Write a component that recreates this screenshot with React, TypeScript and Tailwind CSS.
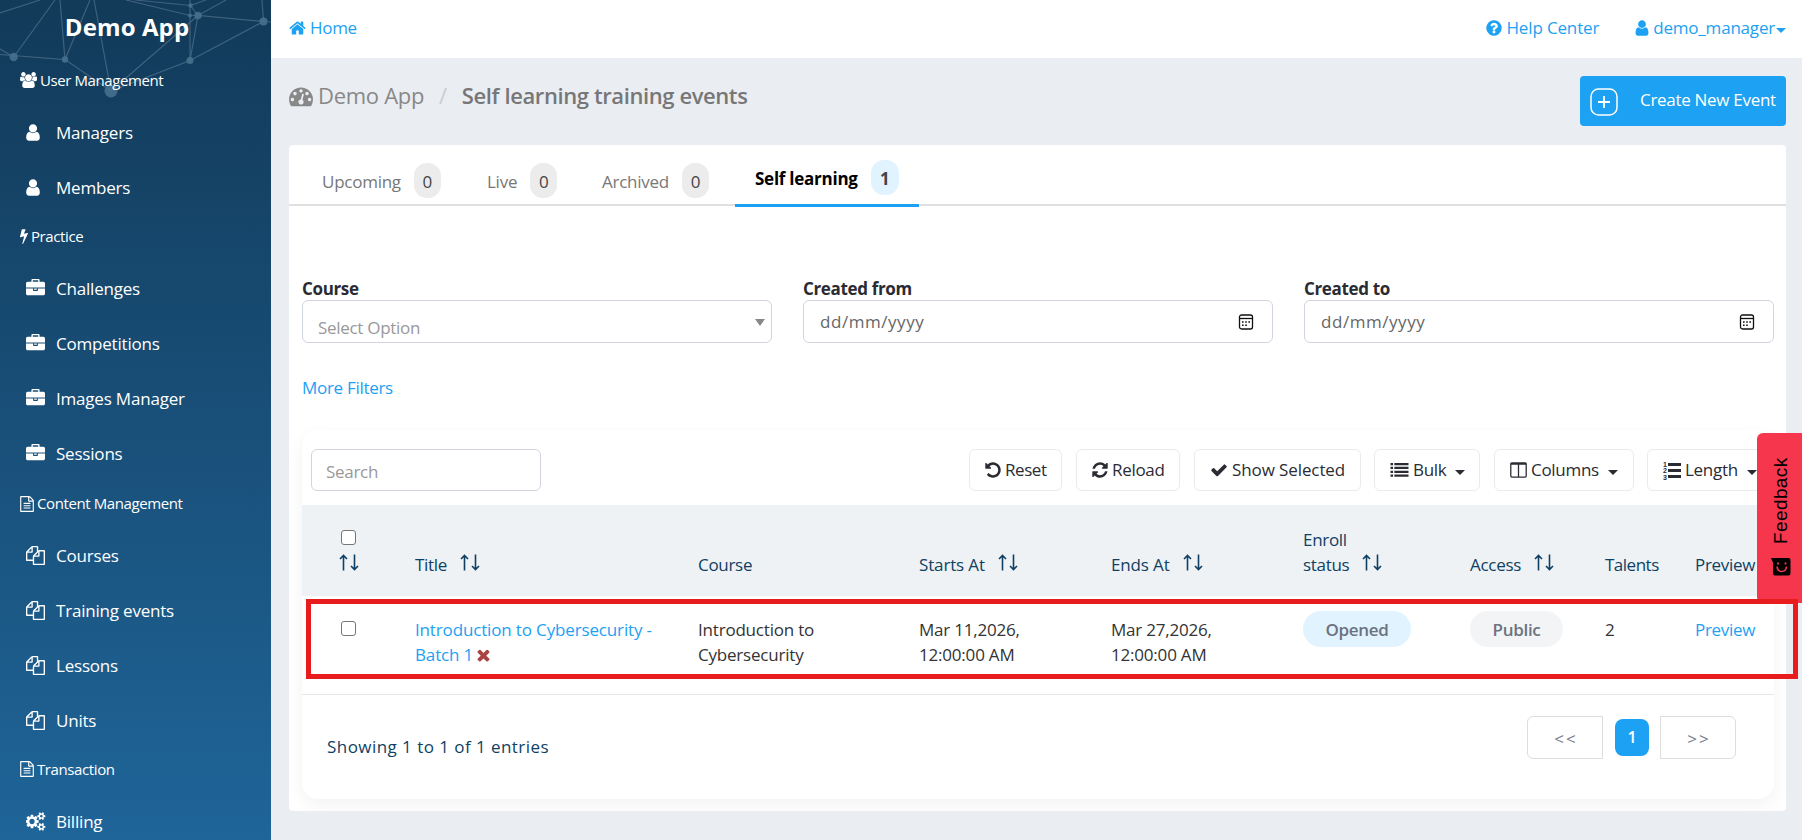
import type { ReactNode } from 'react';

const icons = {
    home: { box: '64 0 1664 1792', d: 'M1472 992v480q0 26-19 45t-45 19h-384v-384h-256v384h-384q-26 0-45-19t-19-45v-480q0-1 .5-3t.5-3l575-474 575 474q1 2 1 6zm223-69l-62 74q-8 9-21 11h-3q-13 0-21-7l-692-577-692 577q-12 8-24 7-13-2-21-11l-62-74q-8-10-7-23.5t11-21.5l719-599q32-26 76-26t76 26l244 204v-195q0-14 9-23t23-9h192q14 0 23 9t9 23v408l219 182q10 8 11 21.5t-7 23.5z' },
    user: { box: '256 0 1280 1792', d: 'M1536 1399q0 109-62.5 187t-150.5 78h-854q-88 0-150.5-78t-62.5-187q0-85 8.5-160.5t31.5-152 58.5-131 94-89 134.5-34.5q131 128 313 128t313-128q76 0 134.5 34.5t94 89 58.5 131 31.5 152 8.5 160.5zm-256-887q0 159-112.5 271.5t-271.5 112.5-271.5-112.5-112.5-271.5 112.5-271.5 271.5-112.5 271.5 112.5 112.5 271.5z' },
    users: { box: '64 0 1920 1792', d: 'M657 896q-162 5-265 128h-134q-82 0-138-40.5t-56-118.5q0-353 124-353 6 0 43.5 21t97.5 42.5 119 21.5q67 0 133-23-5 37-5 66 0 159 93 294zm1071 637q0 120-73 189.5t-194 69.5h-874q-121 0-194-69.5t-73-189.5q0-53 3.5-103.5t14-109 26.5-108.5 43-97.5 62-81 85.5-53.5 111.5-20q10 0 43 21.5t73 48 107 48 135 21.5 135-21.5 107-48 73-48 43-21.5q61 0 111.5 20t85.5 53.5 62 81 43 97.5 26.5 108.5 14 109 3.5 103.5zm-1024-1277q0 106-75 181t-181 75-181-75-75-181 75-181 181-75 181 75 75 181zm704 384q0 159-112.5 271.5t-271.5 112.5-271.5-112.5-112.5-271.5 112.5-271.5 271.5-112.5 271.5 112.5 112.5 271.5zm576 225q0 78-56 118.5t-138 40.5h-134q-103-123-265-128 93-135 93-294 0-29-5-66 66 23 133 23 59 0 119-21.5t97.5-42.5 43.5-21q124 0 124 353zm-128-609q0 106-75 181t-181 75-181-75-75-181 75-181 181-75 181 75 75 181z' },
    bolt: { box: '448 0 896 1792', d: 'M1333 566q18 20 7 44l-540 1157q-13 25-42 25-4 0-14-2-17-5-25.5-19t-4.5-30l197-808-406 101q-4 1-12 1-18 0-31-11-18-15-13-39l201-825q4-14 16-23t28-9h328q19 0 32 12.5t13 29.5q0 8-5 18l-171 463 396-98q8-2 12-2 19 0 34 15z' },
    briefcase: { box: '0 0 1792 1792', d: 'M640 256h512v-128h-512v128zm1152 640v480q0 66-47 113t-113 47h-1472q-66 0-113-47t-47-113v-480h672v160q0 26 19 45t45 19h320q26 0 45-19t19-45v-160h672zm-768 0v128h-256v-128h256zm768-480v384h-1792v-384q0-66 47-113t113-47h352v-160q0-40 28-68t68-28h576q40 0 68 28t28 68v160h352q66 0 113 47t47 113z' },
    file: { box: '128 0 1536 1792', d: 'M1596 380q28 28 48 76t20 88v1152q0 40-28 68t-68 28h-1344q-40 0-68-28t-28-68v-1600q0-40 28-68t68-28h896q40 0 88 20t76 48zm-444-244v376h376q-10-29-22-41l-313-313q-12-12-41-22zm384 1528v-1024h-416q-40 0-68-28t-28-68v-416h-768v1536h1280zm-1024-864q0-14 9-23t23-9h704q14 0 23 9t9 23v64q0 14-9 23t-23 9h-704q-14 0-23-9t-9-23v-64zm736 224q14 0 23 9t9 23v64q0 14-9 23t-23 9h-704q-14 0-23-9t-9-23v-64q0-14 9-23t23-9h704zm0 256q14 0 23 9t9 23v64q0 14-9 23t-23 9h-704q-14 0-23-9t-9-23v-64q0-14 9-23t23-9h704z' },
    copy: { box: '0 0 1792 1792', d: 'M1696 384q40 0 68 28t28 68v1216q0 40-28 68t-68 28h-960q-40 0-68-28t-28-68v-288h-544q-40 0-68-28t-28-68v-672q0-40 20-88t48-76l408-408q28-28 76-48t88-20h416q40 0 68 28t28 68v328q68-40 128-40h416zm-544 213l-299 299h299v-299zm-640-384l-299 299h299v-299zm196 647l316-316v-416h-384v416q0 40-28 68t-68 28h-416v640h512v-256q0-40 20-88t48-76zm956 804v-1152h-384v416q0 40-28 68t-68 28h-416v640h896z' },
    cogs: { box: '0 0 1920 1792', d: 'M832 896q0-106-75-181t-181-75-181 75-75 181 75 181 181 75 181-75 75-181zm768 512q0-52-38-90t-90-38-90 38-38 90q0 53 37.5 90.5t90.5 37.5 90.5-37.5 37.5-90.5zm0-1024q0-52-38-90t-90-38-90 38-38 90q0 53 37.5 90.5t90.5 37.5 90.5-37.5 37.5-90.5zm-384 421v185q0 10-7 19.5t-16 10.5l-155 24q-11 35-32 76 34 48 90 115 7 10 7 20 0 12-7 19-23 30-82.5 89.5t-78.5 59.5q-11 0-21-7l-115-90q-37 19-77 31-11 108-23 155-7 24-30 24h-186q-11 0-20-7.5t-10-17.5l-23-153q-34-10-75-31l-118 89q-7 7-20 7-11 0-21-8-144-133-144-160 0-9 7-19 10-14 41-53t47-61q-23-44-35-82l-152-24q-10-1-17-9.5t-7-19.5v-185q0-10 7-19.5t16-10.5l155-24q11-35 32-76-34-48-90-115-7-11-7-20 0-12 7-20 22-30 82-89t79-59q11 0 21 7l115 90q34-18 77-32 11-108 23-154 7-24 30-24h186q11 0 20 7.5t10 17.5l23 153q34 10 75 31l118-89q8-7 20-7 11 0 21 8 144 133 144 160 0 9-7 19-12 16-42 54t-45 60q23 48 34 82l152 23q10 2 17 10.5t7 19.5zm640 533v140q0 16-149 31-12 27-30 52 51 113 51 138 0 4-4 7-122 71-124 71-8 0-46-47t-52-68q-20 2-30 2t-30-2q-14 21-52 68t-46 47q-2 0-124-71-4-3-4-7 0-25 51-138-18-25-30-52-149-15-149-31v-140q0-16 149-31 13-29 30-52-51-113-51-138 0-4 4-7 4-2 35-20t59-34 30-16q8 0 46 46.5t52 67.5q20-2 30-2t30 2q51-71 92-112l6-2q4 0 124 70 4 3 4 7 0 25-51 138 17 23 30 52 149 15 149 31zm0-1024v140q0 16-149 31-12 27-30 52 51 113 51 138 0 4-4 7-122 71-124 71-8 0-46-47t-52-68q-20 2-30 2t-30-2q-14 21-52 68t-46 47q-2 0-124-71-4-3-4-7 0-25 51-138-18-25-30-52-149-15-149-31v-140q0-16 149-31 13-29 30-52-51-113-51-138 0-4 4-7 4-2 35-20t59-34 30-16q8 0 46 46.5t52 67.5q20-2 30-2t30 2q51-71 92-112l6-2q4 0 124 70 4 3 4 7 0 25-51 138 17 23 30 52 149 15 149 31z' },
    gauge: { box: '0 0 1792 1792', d: 'M384 1152q0-53-37.5-90.5t-90.5-37.5-90.5 37.5-37.5 90.5 37.5 90.5 90.5 37.5 90.5-37.5 37.5-90.5zm192-448q0-53-37.5-90.5t-90.5-37.5-90.5 37.5-37.5 90.5 37.5 90.5 90.5 37.5 90.5-37.5 37.5-90.5zm428 481l101-382q6-26-7.5-48.5t-38.5-29.5-48 6.5-30 39.5l-101 382q-60 5-107 43.5t-63 98.5q-20 77 20 146t117 89 146-20 89-117q16-60-6-117t-72-91zm660-33q0-53-37.5-90.5t-90.5-37.5-90.5 37.5-37.5 90.5 37.5 90.5 90.5 37.5 90.5-37.5 37.5-90.5zm-640-640q0-53-37.5-90.5t-90.5-37.5-90.5 37.5-37.5 90.5 37.5 90.5 90.5 37.5 90.5-37.5 37.5-90.5zm448 192q0-53-37.5-90.5t-90.5-37.5-90.5 37.5-37.5 90.5 37.5 90.5 90.5 37.5 90.5-37.5 37.5-90.5zm320 448q0 261-141 483-19 29-54 29h-1402q-35 0-54-29-141-221-141-483 0-182 71-348t191-286 286-191 348-71 348 71 286 191 191 286 71 348z' },
    help: { box: '128 0 1536 1792', d: 'M1024 1376v-192q0-14-9-23t-23-9h-192q-14 0-23 9t-9 23v192q0 14 9 23t23 9h192q14 0 23-9t9-23zm256-672q0-88-55.5-163t-138.5-116-170-41q-243 0-371 213-15 24 8 42l132 100q7 6 19 6 16 0 25-12 53-68 86-92 34-24 86-24 48 0 85.5 26t37.5 59q0 38-20 61t-68 45q-63 28-115.5 86.5t-52.5 125.5v36q0 14 9 23t23 9h192q14 0 23-9t9-23q0-19 21.5-49.5t54.5-49.5q32-18 49-28.5t46-35 44.5-48 28-60.5 12.5-81zm384 192q0 209-103 385.5t-279.5 279.5-385.5 103-385.5-103-279.5-279.5-103-385.5 103-385.5 279.5-279.5 385.5-103 385.5 103 279.5 279.5 103 385.5z' },
    undo: { box: '128 0 1536 1792', d: 'M1664 896q0 156-61 298t-164 245-245 164-298 61q-172 0-327-72.5t-264-204.5q-7-10-6.5-22.5t8.5-20.5l137-138q10-9 25-9 16 2 23 12 73 95 179 147t225 52q104 0 198.5-40.5t163.5-109.5 109.5-163.5 40.5-198.5-40.5-198.5-109.5-163.5-163.5-109.5-198.5-40.5q-98 0-188 35.5t-160 101.5l137 138q31 30 14 69-17 40-59 40h-448q-26 0-45-19t-19-45v-448q0-42 40-59 39-17 69 14l130 129q107-101 244.5-156.5t284.5-55.5q156 0 298 61t245 164 164 245 61 298z' },
    refresh: { box: '128 0 1536 1792', d: 'M1639 1056q0 5-1 7-64 268-268 434.5t-478 166.5q-146 0-282.5-55t-243.5-157l-129 129q-19 19-45 19t-45-19-19-45v-448q0-26 19-45t45-19h448q26 0 45 19t19 45-19 45l-137 137q71 66 161 102t187 36q134 0 250-65t186-179q11-17 53-117 8-23 30-23h192q13 0 22.5 9.5t9.5 22.5zm25-800v448q0 26-19 45t-45 19h-448q-26 0-45-19t-19-45 19-45l138-138q-148-137-349-137-134 0-250 65t-186 179q-11 17-53 117-8 23-30 23h-199q-13 0-22.5-9.5t-9.5-22.5v-7q65-268 270-434.5t480-166.5q146 0 284 55.5t245 156.5l130-129q19-19 45-19t45 19 19 45z' },
    check: { box: '64 0 1664 1792', d: 'M1671 566q0 40-28 68l-724 724-136 136q-28 28-68 28t-68-28l-136-136-362-362q-28-28-28-68t28-68l136-136q28-28 68-28t68 28l294 295 656-657q28-28 68-28t68 28l136 136q28 28 28 68z' },
    times: { box: '256 0 1280 1792', d: 'M1490 1322q0 40-28 68l-136 136q-28 28-68 28t-68-28l-294-294-294 294q-28 28-68 28t-68-28l-136-136q-28-28-28-68t28-68l294-294-294-294q-28-28-28-68t28-68l136-136q28-28 68-28t68 28l294 294 294-294q28-28 68-28t68 28l136 136q28 28 28 68t-28 68l-294 294 294 294q28 28 28 68z' },
    list: { box: '0 0 1792 1792', d: 'M0 1344h256v224h-256zM0 960h256v224h-256zM0 576h256v224h-256zM0 192h256v224h-256zM384 1344h1408v224h-1408zM384 960h1408v224h-1408zM384 576h1408v224h-1408zM384 192h1408v224h-1408z' },
    columns: { box: '64 0 1664 1792', d: 'M224 1536h608v-1152h-640v1120q0 13 9.500 22.500t22.500 9.500zm1376-32v-1120h-640v1152h608q13 0 22.500-9.500t9.500-22.500zm128-1216v1216q0 66-47 113t-113 47h-1344q-66 0-113-47t-47-113v-1216q0-66 47-113t113-47h1344q66 0 113 47t47 113z' },
};

type IconName = keyof typeof icons;

function Icon({ name, className }: { name: IconName; className: string }) {
    return (
        <svg viewBox={icons[name].box} className={`shrink-0 fill-current ${className}`}>
            <path d={icons[name].d} />
        </svg>
    );
}

function ListOlIcon() {
    return (
        <svg viewBox="0 0 18 18" className="h-[18px] w-[18px] shrink-0 overflow-visible fill-current">
            <path d="M5 2h13v3H5zM5 8h13v3H5zM5 14h13v3H5z" />
            <g className="font-['Liberation_Sans'] text-[7px] font-bold">
                <text x="0" y="5.500">1</text>
                <text x="0" y="12">2</text>
                <text x="0" y="18.500">3</text>
            </g>
        </svg>
    );
}

function Caret() {
    return <span className="mt-1 block h-0 w-0 border-x-[5px] border-t-[5px] border-x-transparent border-t-current" />;
}

function SortArrows() {
    return (
        <svg viewBox="0 0 20 17" className="h-[17px] w-5 shrink-0" fill="none" stroke="currentColor" strokeWidth="1.600">
            <path d="M4.500 16.500V1.500M1 5l3.500-3.500L8 5" />
            <path d="M15.500 .5v15M12 12l3.500 3.500L19 12" />
        </svg>
    );
}

type NavGroup = { title: string; icon: IconName; iconClass: string; className: string; items: { label: string; icon: IconName }[] };

const nav: NavGroup[] = [
    { title: 'User Management', icon: 'users', iconClass: 'h-4 w-[17px]', className: 'h-[49px] pb-px', items: [{ label: 'Managers', icon: 'user' }, { label: 'Members', icon: 'user' }] },
    { title: 'Practice', icon: 'bolt', iconClass: 'h-4 w-2', className: 'h-[46px] pb-1', items: [{ label: 'Challenges', icon: 'briefcase' }, { label: 'Competitions', icon: 'briefcase' }, { label: 'Images Manager', icon: 'briefcase' }, { label: 'Sessions', icon: 'briefcase' }] },
    { title: 'Content Management', icon: 'file', iconClass: 'h-4 w-[14px]', className: 'h-[47px] pb-0.5', items: [{ label: 'Courses', icon: 'copy' }, { label: 'Training events', icon: 'copy' }, { label: 'Lessons', icon: 'copy' }, { label: 'Units', icon: 'copy' }] },
    { title: 'Transaction', icon: 'file', iconClass: 'h-4 w-[14px]', className: 'h-[46px] pb-1', items: [{ label: 'Billing', icon: 'cogs' }] },
];

const navIconSize: Partial<Record<IconName, string>> = {
    user: 'h-[19px] w-[14px]',
    briefcase: 'h-[19px] w-[19px]',
    copy: 'h-[19px] w-[19px]',
    cogs: 'h-[19px] w-5',
};

function Sidebar() {
    return (
        <aside className="relative h-[840px] w-[271px] shrink-0 overflow-hidden bg-linear-to-b from-[#123a59] to-[#1f6599] text-white">
            <svg viewBox="0 0 271 100" className="absolute top-0 left-0 h-[100px] w-[271px]" stroke="#8fa9bd" strokeOpacity=".35" strokeWidth="1.200" fill="none">
                <path d="M0 13L40 0M55 0L13.700 57L0 49M0 54.500L65 59.500L60 0M65 59.500L90 0M65 59.500L111 91L94 0M111 91L198 15.500M111 91L190 60.500V0M190 60.500L198 15.500L263.500 21.500L190 60.500M263.500 21.500L262 0M263.500 21.500L271 22M198 15.500L190.500 5.500L135 0M126 0L190 15.500H198L226 0M190.500 5.500L206 0" />
                <g fill="#47708e" fillOpacity=".9" stroke="none">
                    <circle cx="13.700" cy="57" r="4.200" />
                    <circle cx="65" cy="59.500" r="3.200" />
                    <circle cx="111" cy="91" r="6.500" />
                    <circle cx="190" cy="60.500" r="3.500" />
                    <circle cx="198" cy="15.500" r="3.700" />
                    <circle cx="190.500" cy="5.500" r="2.200" />
                    <circle cx="190" cy="15.500" r="2" />
                    <circle cx="263.500" cy="21.500" r="4" />
                </g>
            </svg>
            <h1 className="relative h-14 pr-[17px] text-center text-2xl leading-[53px] font-bold tracking-[0.1px]">Demo App</h1>
            <nav className="relative">
                {nav.map((group) => (
                    <div key={group.title}>
                        <div className={`flex items-center gap-[3px] pl-5 text-[15px] tracking-[-0.4px] ${group.className}`}>
                            <Icon name={group.icon} className={group.iconClass} />
                            <span>{group.title}</span>
                        </div>
                        {group.items.map((item) => (
                            <a key={item.label} className="flex h-[55px] items-center pl-[26px] tracking-[-0.2px]">
                                <span className="w-[30px]">
                                    <Icon name={item.icon} className={navIconSize[item.icon] ?? ''} />
                                </span>
                                {item.label}
                            </a>
                        ))}
                    </div>
                ))}
            </nav>
        </aside>
    );
}

function TopBar() {
    return (
        <header className="flex h-[58px] items-center justify-between bg-white pr-4 pb-0.5 pl-[18px] text-[#1da1f2]">
            <a className="flex items-center gap-1">
                <Icon name="home" className="h-[18px] w-[17px]" />
                Home
            </a>
            <div className="flex items-center">
                <a className="mr-9 flex items-center gap-1 tracking-[-0.15px]">
                    <Icon name="help" className="h-[18px] w-4" />
                    Help Center
                </a>
                <a className="flex items-center gap-1 tracking-[-0.2px]">
                    <Icon name="user" className="h-[18px] w-[14px]" />
                    demo_manager
                    <span className="-ml-[3px]">
                        <Caret />
                    </span>
                </a>
            </div>
        </header>
    );
}

const tabs = [
    { label: 'Upcoming', count: 0, className: 'w-[165px]' },
    { label: 'Live', count: 0, className: 'w-[115px]' },
    { label: 'Archived', count: 0, className: 'w-[133px]' },
];

function Tabs() {
    return (
        <div className="flex h-[61px] border-b-2 border-[#e0e0e0] pl-[33px] text-[#777]">
            {tabs.map((tab) => (
                <div key={tab.label} className={`mt-[18px] flex h-[35px] items-center gap-[13px] tracking-[-0.25px] ${tab.className}`}>
                    <span className="pt-0.5">{tab.label}</span>
                    <span className="flex h-[35px] w-[27px] items-center justify-center rounded-[13px] bg-[#ececec] pt-0.5 text-[#444]">{tab.count}</span>
                </div>
            ))}
            <div className="flex h-[62px] w-[184px] items-start gap-[13px] border-b-[3px] border-[#1da1f2] pt-[15px] pl-5 font-bold tracking-[-0.25px] text-black">
                <span className="leading-[37px]">Self learning</span>
                <span className="flex h-[35px] w-7 items-center justify-center rounded-[13px] bg-[#e0f3ff] pt-0.5 text-[#444]">1</span>
            </div>
        </div>
    );
}

function CalendarIcon() {
    return (
        <svg viewBox="0 0 16 16" className="h-4 w-4" fill="none" stroke="#111" strokeWidth="1.300">
            <rect x="1.500" y="1" width="13" height="14" rx="2" />
            <path d="M1.500 4.500h13" />
            <path d="M4 8h1.600M7.200 8h1.600M10.400 8h1.600M4 11.200h1.600M7.200 11.200h1.600" strokeWidth="1.600" />
        </svg>
    );
}

function Field({ label, children }: { label: string; children: ReactNode }) {
    return (
        <div className="w-[470px]">
            <div className="h-[23px] leading-[23px] font-bold tracking-[-0.35px] text-[#2b2b33]">{label}</div>
            <div className="flex h-[43px] justify-between rounded-md border border-[#d1d5df]">{children}</div>
        </div>
    );
}

function DateField({ label }: { label: string }) {
    return (
        <Field label={label}>
            <span className="pl-4 leading-[41px] tracking-[0.55px] text-[#666]">dd/mm/yyyy</span>
            <span className="mt-[13px] mr-[18px]">
                <CalendarIcon />
            </span>
        </Field>
    );
}

function ToolButton({ icon, label, caret, className }: { icon: ReactNode; label: string; caret?: boolean; className: string }) {
    return (
        <button className={`flex h-[42px] shrink-0 items-center gap-1 rounded-md border border-[#ebebee] bg-white pl-[15px] text-[#2b2b33] ${className}`}>
            {icon}
            <span className="whitespace-nowrap">{label}</span>
            {caret && (
                <span className="ml-[5px]">
                    <Caret />
                </span>
            )}
        </button>
    );
}

function Toolbar() {
    return (
        <div className="flex h-[75px] items-start overflow-hidden pt-[19px] pl-[9px]">
            <div className="h-[42px] w-[230px] shrink-0 rounded-md border border-[#d1d5df] pl-[14px] leading-[43px] text-[#999]">Search</div>
            <div className="ml-[428px] flex shrink-0">
                <ToolButton className="mr-[14px] w-[93px] tracking-[-0.45px]" icon={<Icon name="undo" className="h-[18px] w-4" />} label="Reset" />
                <ToolButton className="mr-[14px] w-[104px]" icon={<Icon name="refresh" className="h-[18px] w-4" />} label="Reload" />
                <ToolButton className="mr-[13px] w-[167px] tracking-[-0.1px]" icon={<Icon name="check" className="h-[18px] w-[18px]" />} label="Show Selected" />
                <ToolButton className="mr-[14px] w-[106px]" icon={<Icon name="list" className="h-[18px] w-[19px]" />} label="Bulk" caret />
                <ToolButton className="mr-[13px] w-[140px]" icon={<Icon name="columns" className="h-[18px] w-[17px]" />} label="Columns" caret />
                <ToolButton className="w-[134px]" icon={<ListOlIcon />} label="Length" caret />
            </div>
        </div>
    );
}

function HeadCell({ label, sort, className }: { label: string; sort?: boolean; className?: string }) {
    return (
        <th className={`pb-[19px] text-left align-bottom font-normal ${className ?? ''}`}>
            <div className="flex items-end gap-[13px]">
                <span>{label}</span>
                {sort && (
                    <span className="pb-[6px]">
                        <SortArrows />
                    </span>
                )}
            </div>
        </th>
    );
}

function Checkbox() {
    return <span className="block h-[15px] w-[15px] rounded-[3px] border-[1.500px] border-[#767676] bg-white" />;
}

function EventsTable() {
    return (
        <table className="w-[1472px] table-fixed leading-[25px]">
            <colgroup>
                <col className="w-[113px]" />
                <col className="w-[283px]" />
                <col className="w-[221px]" />
                <col className="w-[192px]" />
                <col className="w-[192px]" />
                <col className="w-[167px]" />
                <col className="w-[135px]" />
                <col className="w-[90px]" />
                <col className="w-[79px]" />
            </colgroup>
            <thead className="bg-[#eef2f5] text-[#0f3f63]">
                <tr className="h-[91px]">
                    <th className="pb-[25px] pl-[37px] align-bottom">
                        <div className="flex flex-col gap-[9px]">
                            <span className="pl-[2px]">
                                <Checkbox />
                            </span>
                            <SortArrows />
                        </div>
                    </th>
                    <HeadCell label="Title" sort />
                    <HeadCell label="Course" />
                    <HeadCell label="Starts At" sort className="tracking-[-0.15px]" />
                    <HeadCell label="Ends At" sort className="tracking-[-0.15px]" />
                    <HeadCell label="Enroll status" sort className="[&_span:first-child]:w-[46px] [&_span:last-child]:w-5" />
                    <HeadCell label="Access" sort />
                    <HeadCell label="Talents" className="tracking-[-0.5px]" />
                    <HeadCell label="Preview" />
                </tr>
            </thead>
            <tbody>
                <tr className="h-[98px] border-b border-[#e6e6e6] align-top text-[#333]">
                    <td className="pt-[25px] pl-[39px]">
                        <Checkbox />
                    </td>
                    <td className="pt-[21px] tracking-[-0.15px] text-[#1da1f2]">
                        Introduction to Cybersecurity -<br />
                        <span className="flex items-center gap-1">
                            Batch 1 <Icon name="times" className="h-[18px] w-[13px] text-[#a94442]" />
                        </span>
                    </td>
                    <td className="pt-[21px] tracking-[-0.2px]">
                        Introduction to
                        <br />
                        Cybersecurity
                    </td>
                    <td className="pt-[21px] tracking-[-0.2px]">
                        Mar 11,2026,
                        <br />
                        12:00:00 AM
                    </td>
                    <td className="pt-[21px] tracking-[-0.2px]">
                        Mar 27,2026,
                        <br />
                        12:00:00 AM
                    </td>
                    <td className="pt-[15px]">
                        <span className="flex h-9 w-[108px] items-center justify-center rounded-full bg-[#e0f3ff] font-semibold text-[#6b7280]">Opened</span>
                    </td>
                    <td className="pt-[15px]">
                        <span className="flex h-9 w-[93px] items-center justify-center rounded-full bg-[#f3f4f6] font-semibold text-[#6b7280]">Public</span>
                    </td>
                    <td className="pt-[21px]">2</td>
                    <td className="pt-[21px] text-[#1da1f2]">Preview</td>
                </tr>
            </tbody>
        </table>
    );
}

function Pagination() {
    return (
        <div className="flex h-[104px] items-start justify-between pr-[38px] pl-[25px]">
            <span className="pt-[39px] tracking-[0.45px] text-[#0f3f63]">Showing 1 to 1 of 1 entries</span>
            <div className="flex items-center pt-[21px] text-[#777b90]">
                <span className="flex h-[43px] w-[76px] items-center justify-center rounded-l-md border border-[#ddd] bg-white pt-1 pl-0.5 text-[17px] tracking-[2px]">&lt;&lt;</span>
                <span className="mr-[11px] ml-3 flex h-[37px] w-[34px] items-center justify-center rounded-lg bg-[#1da1f2] text-base font-semibold text-white">1</span>
                <span className="flex h-[43px] w-[76px] items-center justify-center rounded-r-md border border-[#ddd] bg-white pt-1 pl-0.5 text-[17px] tracking-[2px]">&gt;&gt;</span>
            </div>
        </div>
    );
}

function FeedbackTab() {
    return (
        <button className="absolute top-[433px] right-0 flex h-[170px] w-[45px] flex-col items-center rounded-l-md bg-[#f5364d] pt-6 text-black">
            <span className="h-[88px] rotate-180 pr-0.5 font-['Liberation_Sans'] text-[19px] leading-6 tracking-[0.4px] [writing-mode:vertical-rl]">Feedback</span>
            <svg viewBox="0 0 20 18" className="mt-[13px] mr-1 ml-1.5 h-[18px] w-5">
                <path d="M0 0H17.500Q19.500 0 19.500 2V15.500Q19.500 17.500 17.500 17.500H4Q2 17.500 2 15.500V4.500Z" />
                <path d="M6 8.500Q6.500 13.500 10.800 13.500Q15 13.500 15.500 8.500" fill="none" stroke="#f5364d" strokeWidth="1.600" />
                <path d="M7 4.500v2M14.500 4.500v2" stroke="#f5364d" strokeWidth="1.800" />
            </svg>
        </button>
    );
}

export default function App() {
    return (
        <div className="relative flex h-[840px] w-[1802px] overflow-hidden bg-[#eaeef3] font-['Open_Sans',sans-serif] text-[17px] tracking-[-0.3px]">
            <Sidebar />
            <div className="flex-1">
                <TopBar />
                <main className="pr-4 pl-[18px]">
                    <div className="flex h-[87px] items-start justify-between pt-[18px]">
                        <div className="flex items-center pt-[3px] text-[22px] text-[#888]">
                            <Icon name="gauge" className="h-6 w-6" />
                            <span className="ml-[5px]">Demo App</span>
                            <span className="mr-[14px] ml-[15px] text-[#ccc]">/</span>
                            <span className="ml-px font-semibold tracking-[-0.4px] text-[#777]">Self learning training events</span>
                        </div>
                        <button className="flex h-[50px] w-[206px] items-center rounded bg-[#1da1f2] pl-2.5 text-white">
                            <svg viewBox="0 0 28 28" className="mt-0.5 h-7 w-7" fill="none" stroke="currentColor" strokeWidth="1.500">
                                <rect x="1" y="1" width="26" height="26" rx="7.500" />
                                <path d="M14 8v12M8 14h12" strokeWidth="1.800" />
                            </svg>
                            <span className="ml-[22px] pb-0.5 whitespace-nowrap">Create New Event</span>
                        </button>
                    </div>
                    <section className="h-[666px] overflow-hidden rounded bg-white">
                        <Tabs />
                        <div className="pt-[71px] pr-3 pl-[13px]">
                            <div className="flex gap-[31px]">
                                <Field label="Course">
                                    <span className="pt-[6px] pl-[15px] leading-[41px] text-[#999]">Select Option</span>
                                    <span className="mt-[18px] mr-[6px] h-0 w-0 border-x-[5px] border-t-[7px] border-x-transparent border-t-[#888]" />
                                </Field>
                                <DateField label="Created from" />
                                <DateField label="Created to" />
                            </div>
                            <div className="mt-8 h-[55px] text-[#1da1f2]">More Filters</div>
                            <div className="h-[369px] w-[1472px] rounded-2xl bg-white shadow-[0_6px_18px_rgba(0,0,0,0.05)]">
                                <Toolbar />
                                <EventsTable />
                                <Pagination />
                            </div>
                        </div>
                    </section>
                </main>
            </div>
            <FeedbackTab />
            {/* highlighted row marker */}
            <div className="absolute top-[599px] left-[306px] h-20 w-[1492px] border-5 border-[#e81c1c]" />
        </div>
    );
}
